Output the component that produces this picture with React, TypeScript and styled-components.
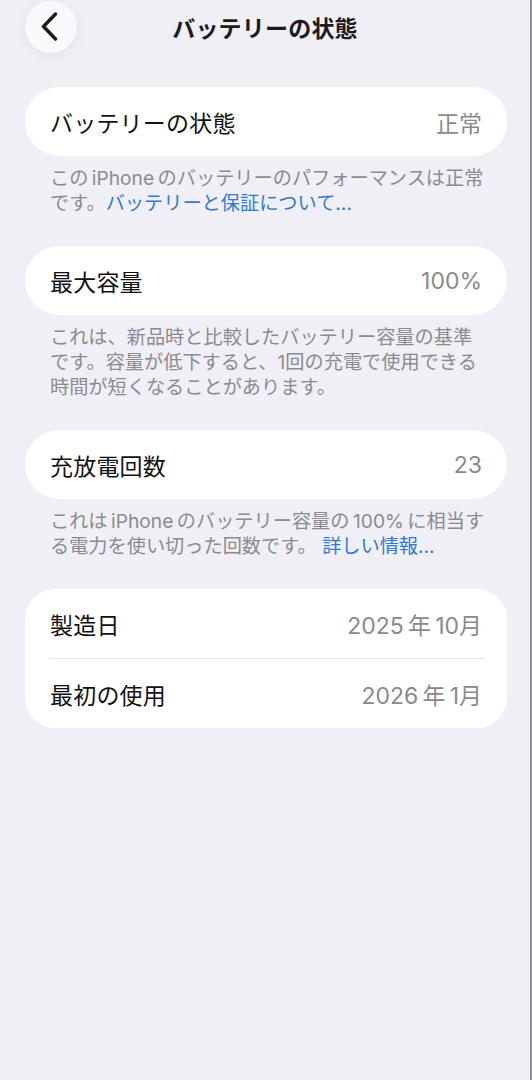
import React from "react";
import styled, { createGlobalStyle } from "styled-components";

const GlobalStyle = createGlobalStyle`
  html, body {
    margin: 0;
    padding: 0;
    background: #f0eff5;
  }
  body {
    font-family: "Inter", "Noto Sans CJK JP", sans-serif;
    -webkit-font-smoothing: antialiased;
  }
`;

type InfoRow = { label: string; value: string };
type Section = {
  rows: InfoRow[];
  footer?: { lines: string[]; link?: string };
};

// thin space used where iOS pads latin words inside Japanese text
const ts = "\u2009";

const sections: Section[] = [
  {
    rows: [{ label: "バッテリーの状態", value: "正常" }],
    footer: {
      lines: [`この${ts}iPhone${ts}のバッテリーのパフォーマンスは正常`, "です。"],
      link: "バッテリーと保証について...",
    },
  },
  {
    rows: [{ label: "最大容量", value: "100%" }],
    footer: {
      lines: [
        "これは、新品時と比較したバッテリー容量の基準",
        "です。容量が低下すると、1回の充電で使用できる",
        "時間が短くなることがあります。",
      ],
    },
  },
  {
    rows: [{ label: "充放電回数", value: "23" }],
    footer: {
      lines: [
        `これは${ts}iPhone${ts}のバッテリー容量の${ts}100%${ts}に相当す`,
        "る電力を使い切った回数です。",
      ],
      link: "詳しい情報...",
    },
  },
  {
    rows: [
      { label: "製造日", value: `2025${ts}年${ts}10月` },
      { label: "最初の使用", value: `2026${ts}年${ts}1月` },
    ],
  },
];

export default function App() {
  return (
    <>
      <GlobalStyle />
      <Screen>
        <NavBar>
          <BackButton aria-label="戻る">
            <svg width="17" height="29" viewBox="0 0 17 29" fill="none">
              <path
                d="M14.5 2 L2.5 14.5 L14.5 27"
                stroke="#1c1c1e"
                strokeWidth="3.4"
                strokeLinecap="round"
                strokeLinejoin="round"
              />
            </svg>
          </BackButton>
          <NavTitle>バッテリーの状態</NavTitle>
          <span />
        </NavBar>

        <Content>
          {sections.map((section, i) => (
            <Group key={i}>
              <Card $multi={section.rows.length > 1}>
                {section.rows.map((row, j) => (
                  <React.Fragment key={row.label}>
                    {j > 0 && <Divider />}
                    <Row>
                      <Label>{row.label}</Label>
                      <Value>{row.value}</Value>
                    </Row>
                  </React.Fragment>
                ))}
              </Card>
              {section.footer && (
                <Footer>
                  {section.footer.lines.map((line, k) => (
                    <React.Fragment key={k}>
                      {k > 0 && <br />}
                      {line}
                    </React.Fragment>
                  ))}
                  {section.footer.link && (
                    <FooterLink>
                      {section.footer.link.startsWith("詳") ? " " : ""}
                      {section.footer.link}
                    </FooterLink>
                  )}
                </Footer>
              )}
            </Group>
          ))}
        </Content>
      </Screen>
    </>
  );
}

const Screen = styled.div`
  min-height: 1080px;
  box-sizing: border-box;
  background: #f0eff5;
  border-right: 2px solid #8f8f93;
`;

const NavBar = styled.header`
  height: 54px;
  display: grid;
  grid-template-columns: 1fr auto 1fr;
  align-items: center;
  padding: 0 25px;
`;

const BackButton = styled.button`
  width: 52px;
  height: 52px;
  border-radius: 50%;
  border: none;
  padding: 0 3px 0 0;
  margin-top: -1px;
  background: #f9f9fb;
  box-shadow: 0 3px 14px rgba(60, 60, 90, 0.07);
  display: flex;
  align-items: center;
  justify-content: center;
  cursor: pointer;
`;

const NavTitle = styled.h1`
  margin: 0;
  font-size: 23px;
  font-weight: 700;
  color: #1c1c1e;
  letter-spacing: 0.2px;
`;

const Content = styled.main`
  padding: 33px 23px 0 25px;
  display: flex;
  flex-direction: column;
  gap: 30px;
`;

const Group = styled.section`
  display: flex;
  flex-direction: column;
`;

const Card = styled.div<{ $multi: boolean }>`
  background: #ffffff;
  border-radius: ${(p) => (p.$multi ? "30px" : "35px")};
  overflow: hidden;
`;

const Row = styled.div`
  height: 69px;
  padding: 0 25px 0 25px;
  display: flex;
  align-items: center;
  justify-content: space-between;
  font-size: 23px;
`;

const Label = styled.span`
  color: #111113;
  letter-spacing: 0.2px;
`;

const Value = styled.span`
  color: #8a8a8e;
`;

const Divider = styled.div`
  height: 1px;
  margin: 0 23px 0 24px;
  background: #e3e3e8;
`;

const Footer = styled.p`
  margin: 0;
  padding: 10px 25px 0 25px;
  font-size: 19.2px;
  line-height: 25px;
  color: #8b8b90;
  white-space: nowrap;
`;

const FooterLink = styled.a`
  color: #2f7ad3;
  text-decoration: none;
  cursor: pointer;
`;
